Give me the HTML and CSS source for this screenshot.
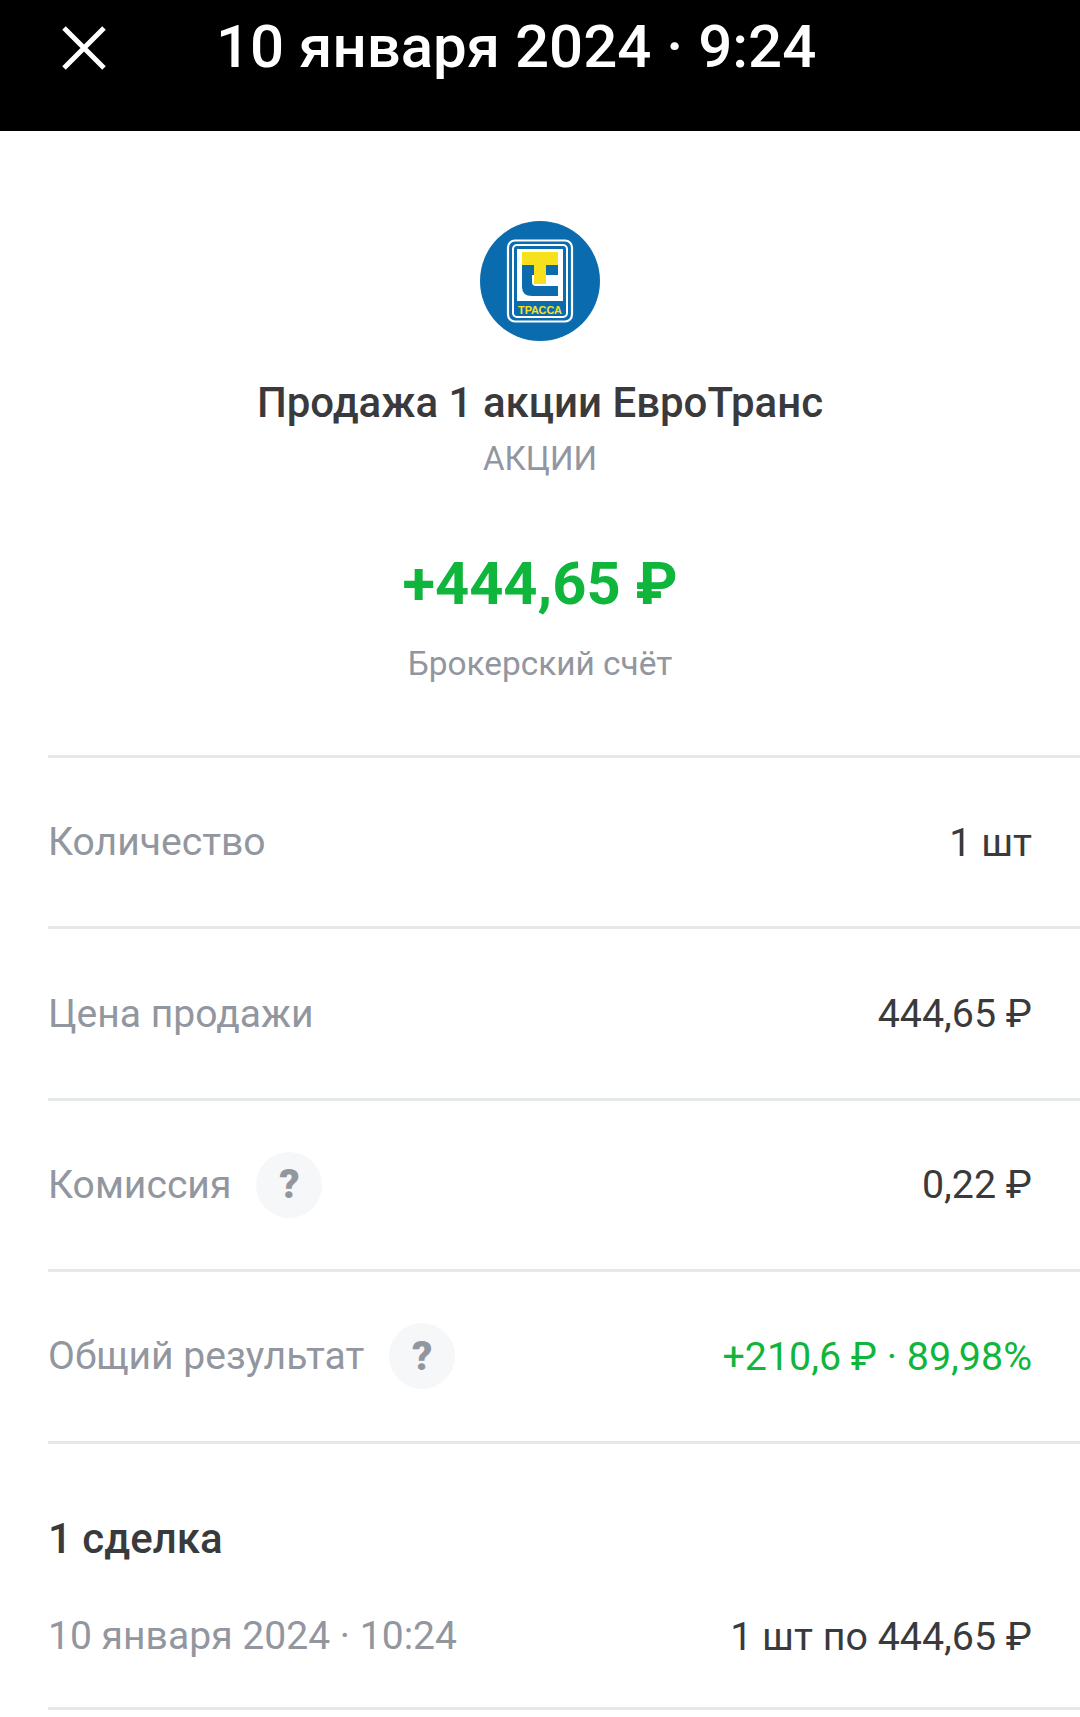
FILE: index.html
```html
<!DOCTYPE html>
<html lang="ru">
<head>
<meta charset="utf-8">
<title>Операция</title>
<link rel="stylesheet" href="styles.css">
</head>
<body>
<header class="topbar">
  <svg class="close" width="44" height="44" viewBox="0 0 44 44"><path d="M2 2L42 42M42 2L2 42" stroke="#fff" stroke-width="5" fill="none"/></svg>
  <div class="topbar-title">10 января 2024 · 9:24</div>
</header>
<main class="content">
  <section class="hero">
    <svg class="logo" width="120" height="120" viewBox="0 0 120 120">
      <circle cx="60" cy="60" r="60" fill="#0a6cae"/>
      <rect x="28" y="19.5" width="64" height="81" rx="7" fill="none" stroke="#fff" stroke-width="2.2"/>
      <rect x="33" y="24" width="54" height="72" rx="4" fill="none" stroke="#fff" stroke-width="2"/>
      <rect x="37" y="28" width="46" height="52" fill="#fff"/>
      <path d="M42 44H78V75H52Q42 75 42 66Z" fill="#0a6cae"/>
      <path d="M52 54H78V65H56Q52 65 52 61Z" fill="#fff"/>
      <path d="M42 31H78V44H66V63H54V44H42Z" fill="#f7e01c"/>
      <text x="60" y="92.5" class="logo-text" text-anchor="middle" textLength="44" lengthAdjust="spacingAndGlyphs">ТРАССА</text>
    </svg>
    <h1 class="hero-title">Продажа 1 акции ЕвроТранс</h1>
    <div class="hero-sub">АКЦИИ</div>
    <div class="hero-amount">+444,65 ₽</div>
    <div class="hero-account">Брокерский счёт</div>
  </section>
  <section class="details">
    <div class="row">
      <div class="row-label">Количество</div>
      <div class="row-value">1 шт</div>
    </div>
    <div class="row">
      <div class="row-label">Цена продажи</div>
      <div class="row-value">444,65 ₽</div>
    </div>
    <div class="row">
      <div class="row-label">Комиссия <span class="help">?</span></div>
      <div class="row-value">0,22 ₽</div>
    </div>
    <div class="row">
      <div class="row-label">Общий результат <span class="help">?</span></div>
      <div class="row-value positive">+210,6 ₽ · 89,98%</div>
    </div>
  </section>
  <section class="deals">
    <h2 class="deals-title">1 сделка</h2>
    <div class="deal">
      <div class="row-label">10 января 2024 · 10:24</div>
      <div class="row-value">1 шт по 444,65 ₽</div>
    </div>
  </section>
</main>
</body>
</html>
```
FILE: styles.css
```css
* { box-sizing: border-box; }
html, body { margin: 0; padding: 0; }
body {
  width: 1080px;
  height: 1717px;
  overflow: hidden;
  background: #fff;
  font-family: Roboto, "Noto Sans", sans-serif;
  color: #333;
}
.topbar {
  height: 131px;
  background: #000;
  color: #fff;
  display: flex;
  align-items: flex-start;
  padding: 26px 0 0 62px;
}
.close { flex: none; }
.topbar-title {
  margin: -13px 0 0 110px;
  font-size: 60px;
  line-height: 68px;
  font-weight: 500;
  white-space: nowrap;
}
.hero {
  display: flex;
  flex-direction: column;
  align-items: center;
  padding-top: 90px;
}
.logo { display: block; }
.logo-text {
  font-family: "Liberation Sans", sans-serif;
  font-size: 11px;
  font-weight: 700;
  fill: #f7e01c;
}
.hero-title {
  margin: 38px 0 0;
  font-size: 42px;
  line-height: 48px;
  font-weight: 500;
  color: #3a3a3c;
}
.hero-sub {
  margin-top: 9px;
  font-size: 33px;
  line-height: 46px;
  color: #92969f;
}
.hero-amount {
  margin-top: 67px;
  font-size: 59.6px;
  line-height: 70px;
  font-weight: 700;
  color: #10b53c;
}
.hero-account {
  margin-top: 23px;
  font-size: 33.4px;
  line-height: 44px;
  color: #92969f;
}
.details {
  margin: 69px 0 0 48px;
  border-top: 3px solid #e6e9ea;
}
.row {
  height: 171.4px;
  border-bottom: 3px solid #e6e9ea;
  display: flex;
  align-items: center;
  justify-content: space-between;
  padding-right: 48px;
}
.row-label {
  display: flex;
  align-items: center;
  gap: 25px;
  font-size: 39.1px;
  color: #92969f;
}
.row-value {
  font-size: 39.4px;
  color: #3a3a3c;
}
.positive { color: #10b53c; }
.help {
  width: 66px;
  height: 66px;
  border-radius: 50%;
  background: #f6f7f8;
  display: flex;
  align-items: center;
  justify-content: center;
  font-size: 40px;
  font-weight: 900;
  color: #92969f;
}
.deals { margin-left: 48px; padding-top: 71px; }
.deals-title {
  margin: 0;
  font-size: 42px;
  line-height: 48px;
  font-weight: 500;
  color: #3a3a3c;
}
.deal {
  margin-top: 50px;
  display: flex;
  justify-content: space-between;
  align-items: center;
  padding: 0 48px 47px 0;
  border-bottom: 3px solid #e6e9ea;
}
```
